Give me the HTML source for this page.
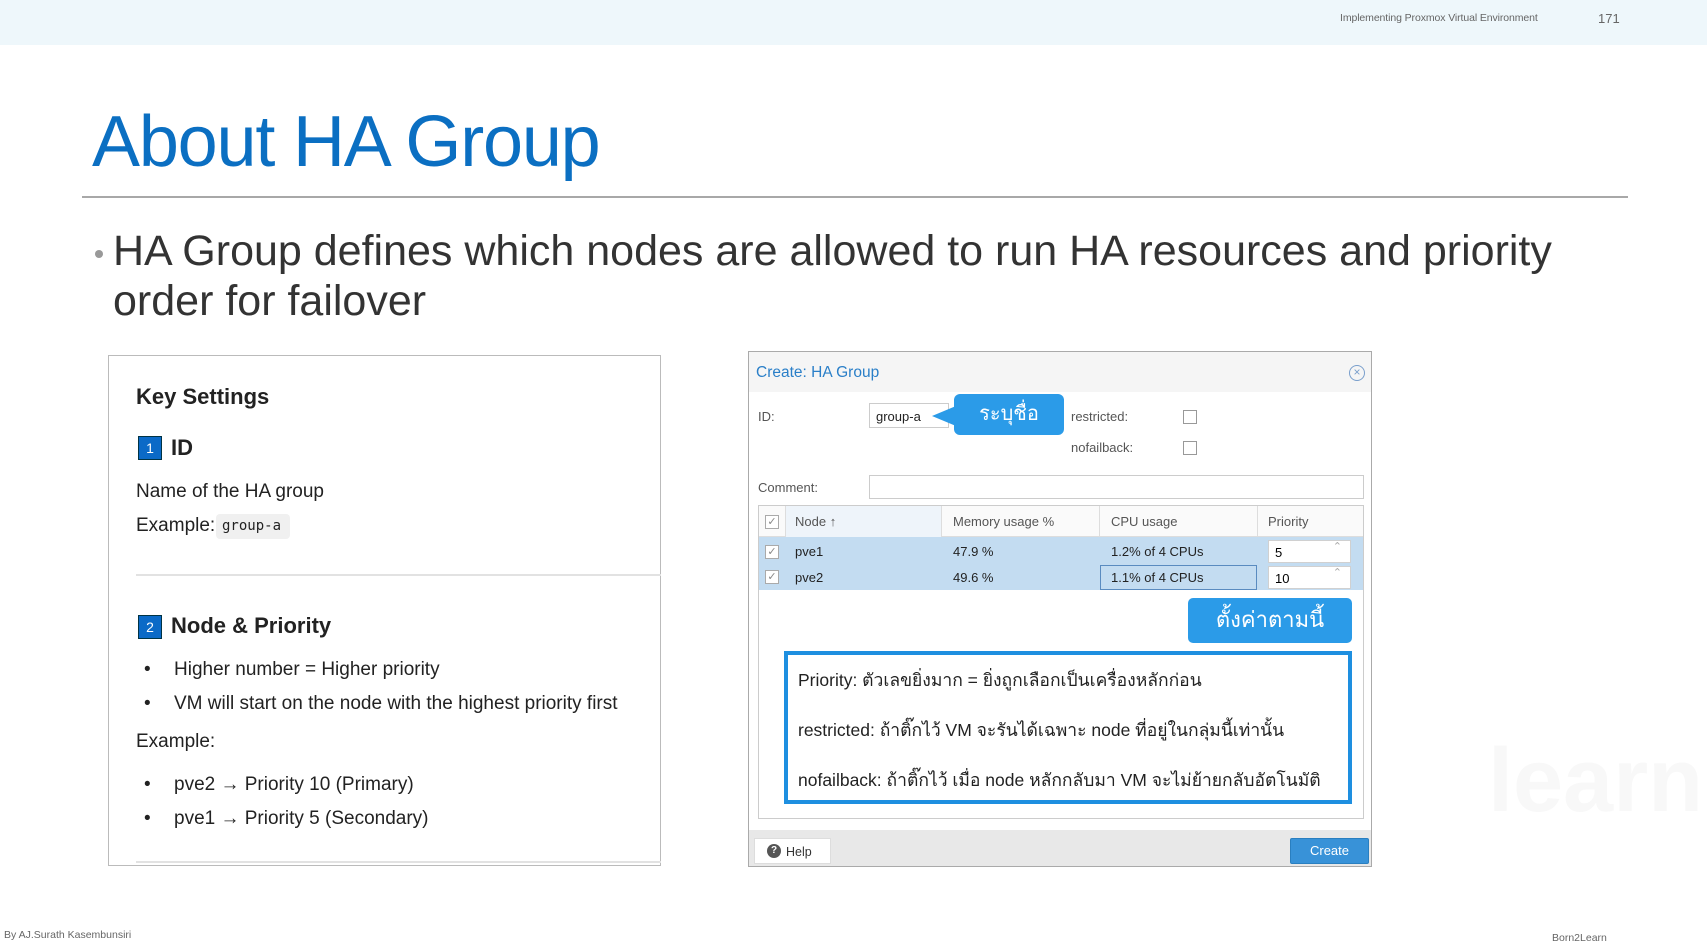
<!DOCTYPE html>
<html><head><meta charset="utf-8"><style>
*{margin:0;padding:0;box-sizing:border-box}
body{width:1707px;height:951px;background:#fff;position:relative;overflow:hidden;font-family:"Liberation Sans",sans-serif}
.a{position:absolute;white-space:nowrap}
.th{font-family:"Liberation Sans","DejaVu Sans",sans-serif}
.lp{font-family:"Liberation Sans",sans-serif;color:#222}
.badge{position:absolute;width:24px;height:24px;background:#0b6ac7;border:1px solid #034;color:#fff;font-size:14px;text-align:center;line-height:22px;font-family:"Liberation Sans",sans-serif}
.cb{position:absolute;width:14px;height:14px;border:1px solid #999;background:#fff}
.dl{font-size:13px;color:#555}
.cell{font-size:13px;color:#222}
.hd{font-size:13px;color:#555}
.spin{position:absolute;width:83px;height:23px;background:#fff;border:1px solid #d0d0d0;font-size:13px;padding:4px 6px}
.spin:after{content:"⌃";position:absolute;right:8px;top:-1px;color:#aaa;font-size:11px}
</style></head><body>
<div class="a" style="left:0;top:0;width:1707px;height:45px;background:#eef7fb"></div>
<div class="a" style="left:1340px;top:12px;font-size:10.5px;color:#666;letter-spacing:-0.1px">Implementing Proxmox Virtual Environment</div>
<div class="a" style="left:1598px;top:11px;font-size:13px;color:#666">171</div>

<div class="a" style="left:92px;top:101px;font-size:72px;color:#0b6fc2;letter-spacing:-1.2px">About HA Group</div>
<div class="a" style="left:82px;top:196px;width:1546px;height:2px;background:#a8a8a8"></div>
<div class="a" style="left:95px;top:250px;width:8px;height:8px;border-radius:50%;background:#999"></div>
<div class="a" style="left:113px;top:226px;font-size:43px;color:#333;line-height:50px">HA Group defines which nodes are allowed to run HA resources and priority<br>order for failover</div>

<!-- left panel -->
<div class="a" style="left:108px;top:355px;width:553px;height:511px;border:1px solid #bbb;background:#fff"></div>
<div class="a lp" style="left:136px;top:384px;font-size:22px;font-weight:bold">Key Settings</div>
<div class="badge" style="left:138px;top:436px">1</div>
<div class="a lp" style="left:171px;top:435px;font-size:22px;font-weight:bold">ID</div>
<div class="a lp" style="left:136px;top:481px;font-size:19px">Name of the HA group</div>
<div class="a lp" style="left:136px;top:515px;font-size:19px">Example:</div>
<div class="a" style="left:216px;top:514px;width:74px;height:25px;background:#f0f0f0;border-radius:4px;font-family:'DejaVu Sans Mono','Liberation Mono',monospace;font-size:14px;color:#222;padding:4px 6px">group-a</div>
<div class="a" style="left:136px;top:574px;width:525px;height:2px;background:#e2e2e2"></div>
<div class="badge" style="left:138px;top:615px">2</div>
<div class="a lp" style="left:171px;top:613px;font-size:22px;font-weight:bold">Node &amp; Priority</div>
<div class="a lp" style="left:144px;top:653px;font-size:19px;line-height:34px">•<br>•</div>
<div class="a lp" style="left:174px;top:653px;font-size:19px;line-height:34px">Higher number = Higher priority<br>VM will start on the node with the highest priority first</div>
<div class="a lp" style="left:136px;top:731px;font-size:19px">Example:</div>
<div class="a lp" style="left:144px;top:768px;font-size:19px;line-height:34px">•<br>•</div>
<div class="a lp" style="left:174px;top:768px;font-size:19px;line-height:34px">pve2 → Priority 10 (Primary)<br>pve1 → Priority 5 (Secondary)</div>
<div class="a" style="left:136px;top:861px;width:525px;height:2px;background:#e2e2e2"></div>

<!-- dialog -->
<div class="a" style="left:748px;top:351px;width:624px;height:516px;border:1px solid #aaa;background:#fff"></div>
<div class="a" style="left:749px;top:352px;width:622px;height:40px;background:#f5f5f5"></div>
<div class="a" style="left:756px;top:364px;font-size:15.5px;color:#2a7fc8">Create: HA Group</div>
<div class="a" style="left:1349px;top:365px;width:16px;height:16px;border:1px solid #7a9fcc;border-radius:50%;color:#7a9fcc;font-size:12px;line-height:13px;text-align:center">×</div>
<div class="a dl" style="left:758px;top:409px">ID:</div>
<div class="a" style="left:869px;top:403px;width:80px;height:25px;border:1px solid #ccc;background:#fff;font-size:13px;color:#222;padding:5px 6px">group-a</div>
<div class="a" style="left:932px;top:406px;width:0;height:0;border-top:10px solid transparent;border-bottom:10px solid transparent;border-right:24px solid #2b9be8"></div>
<div class="a th" style="left:954px;top:394px;width:110px;height:41px;background:#2b9be8;border-radius:6px;color:#fff;font-size:20px;text-align:center;line-height:41px">ระบุชื่อ</div>
<div class="a dl" style="left:1071px;top:409px">restricted:</div>
<div class="cb" style="left:1183px;top:410px"></div>
<div class="a dl" style="left:1071px;top:440px">nofailback:</div>
<div class="cb" style="left:1183px;top:441px"></div>
<div class="a dl" style="left:758px;top:480px">Comment:</div>
<div class="a" style="left:869px;top:475px;width:495px;height:24px;border:1px solid #ccc"></div>

<div class="a" style="left:758px;top:505px;width:606px;height:314px;border:1px solid #ccc;background:#fff"></div>
<div class="a" style="left:759px;top:506px;width:604px;height:31px;background:#fafafa;border-bottom:1px solid #ddd"></div>
<div class="a" style="left:785px;top:506px;width:156px;height:31px;background:#eef4fa"></div>
<div class="a" style="left:785px;top:506px;width:1px;height:31px;background:#ddd"></div>
<div class="a" style="left:941px;top:506px;width:1px;height:31px;background:#ddd"></div>
<div class="a" style="left:1099px;top:506px;width:1px;height:31px;background:#ddd"></div>
<div class="a" style="left:1257px;top:506px;width:1px;height:31px;background:#ddd"></div>
<div class="cb" style="left:765px;top:515px;border-color:#aaa;font-size:11px;line-height:12px;color:#888;text-align:center">✓</div>
<div class="a hd" style="left:795px;top:514px">Node ↑</div>
<div class="a hd" style="left:953px;top:514px">Memory usage %</div>
<div class="a hd" style="left:1111px;top:514px">CPU usage</div>
<div class="a hd" style="left:1268px;top:514px">Priority</div>
<div class="a" style="left:759px;top:537px;width:604px;height:53px;background:#c3dcf1"></div>
<div class="cb" style="left:765px;top:545px;border-color:#aaa;font-size:11px;line-height:12px;color:#888;text-align:center">✓</div>
<div class="cb" style="left:765px;top:570px;border-color:#aaa;font-size:11px;line-height:12px;color:#888;text-align:center">✓</div>
<div class="a cell" style="left:795px;top:544px">pve1</div>
<div class="a cell" style="left:953px;top:544px">47.9 %</div>
<div class="a cell" style="left:1111px;top:544px">1.2% of 4 CPUs</div>
<div class="a" style="left:1100px;top:565px;width:157px;height:25px;border:1px solid #5a8bc0"></div>
<div class="a cell" style="left:795px;top:570px">pve2</div>
<div class="a cell" style="left:953px;top:570px">49.6 %</div>
<div class="a cell" style="left:1111px;top:570px">1.1% of 4 CPUs</div>
<div class="spin" style="left:1268px;top:540px">5</div>
<div class="spin" style="left:1268px;top:566px">10</div>

<div class="a th" style="left:1188px;top:598px;width:164px;height:45px;background:#2b9be8;border-radius:5px;color:#fff;font-size:22px;text-align:center;line-height:43px">ตั้งค่าตามนี้</div>
<div class="a" style="left:784px;top:651px;width:568px;height:153px;border:4px solid #1e8fe0;background:#fff"></div>
<div class="a th" style="left:798px;top:655px;font-size:17.5px;color:#222;line-height:50px">Priority: ตัวเลขยิ่งมาก = ยิ่งถูกเลือกเป็นเครื่องหลักก่อน<br>restricted: ถ้าติ๊กไว้ VM จะรันได้เฉพาะ node ที่อยู่ในกลุ่มนี้เท่านั้น<br>nofailback: ถ้าติ๊กไว้ เมื่อ node หลักกลับมา VM จะไม่ย้ายกลับอัตโนมัติ</div>

<div class="a" style="left:749px;top:830px;width:622px;height:36px;background:#e8e8e8"></div>
<div class="a" style="left:754px;top:838px;width:77px;height:26px;background:#fff;border:1px solid #ddd;font-size:12.5px;color:#333;padding:6px 0 0 31px">Help</div>
<div class="a" style="left:767px;top:844px;width:14px;height:14px;border-radius:50%;background:#555;color:#fff;font-size:10px;font-weight:bold;text-align:center;line-height:14px">?</div>
<div class="a" style="left:1290px;top:838px;width:79px;height:26px;background:#3892d8;border:1px solid #2a7fc0;border-radius:2px;color:#fff;font-size:13px;text-align:center;line-height:24px">Create</div>

<div class="a" style="left:1488px;top:730px;font-size:90px;color:#f8f8f8;font-weight:bold">learn</div>

<div class="a" style="left:4px;top:929px;font-size:10.5px;color:#666">By AJ.Surath Kasembunsiri</div>
<div class="a" style="left:1552px;top:932px;font-size:10.5px;color:#666">Born2Learn</div>
</body></html>
